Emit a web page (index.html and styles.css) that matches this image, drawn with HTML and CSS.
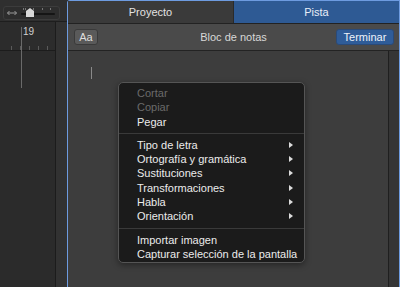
FILE: index.html
```html
<!DOCTYPE html>
<html>
<head>
<meta charset="utf-8">
<link rel="stylesheet" href="styles.css">
</head>
<body>
<div class="left">
  <div class="ltool">
    <div class="zoombox">
      <svg class="arrows" width="10" height="6" viewBox="0 0 10 6"><path d="M0.5 3 H9.5 M2.5 1 L0.5 3 L2.5 5 M7.5 1 L9.5 3 L7.5 5" stroke="#9a9a9a" stroke-width="1" fill="none"/></svg>
      <div class="slider">
        <span class="tk t1"></span><span class="tk t2"></span><span class="tk t3"></span><span class="tk t4"></span><span class="tk t5"></span>
        <div class="track"></div>
        <svg class="thumb" width="8" height="9" viewBox="0 0 8 9"><path d="M4 0 L8 3 L8 9 L0 9 L0 3 Z" fill="#d8d8d8"/></svg>
      </div>
    </div>
  </div>
  <div class="lbody">
    <div class="tracks">
      <div class="ruler">
        <span class="bar">19</span>
        <div class="ticks"><i></i><i></i><i></i><i></i><i></i></div>
      </div>
      <div class="lanes"></div>
      <div class="playhead"></div>
    </div>
    <div class="gutter"></div>
  </div>
</div>
<div class="panel">
  <div class="tabs">
    <div class="tab">Proyecto</div>
    <div class="tab active">Pista</div>
  </div>
  <div class="ptool">
    <button class="aa">Aa</button>
    <div class="ptitle">Bloc de notas</div>
    <button class="done">Terminar</button>
  </div>
  <div class="pbody">
    <div class="notes"><span class="caret"></span></div>
    <div class="pscroll"></div>
  </div>
</div>
<div class="menu">
  <div class="item dis">Cortar</div>
  <div class="item dis">Copiar</div>
  <div class="item">Pegar</div>
  <div class="sep"></div>
  <div class="item sub">Tipo de letra</div>
  <div class="item sub">Ortografía y gramática</div>
  <div class="item sub">Sustituciones</div>
  <div class="item sub">Transformaciones</div>
  <div class="item sub">Habla</div>
  <div class="item sub">Orientación</div>
  <div class="sep"></div>
  <div class="item">Importar imagen</div>
  <div class="item">Capturar selección de la pantalla</div>
</div>
</body>
</html>
```
FILE: styles.css
```css
* { box-sizing: border-box; }
html, body { margin: 0; padding: 0; }
body {
  width: 400px; height: 287px; overflow: hidden;
  background: #2a2a2a;
  font-family: "Liberation Sans", Arial, sans-serif;
  display: flex;
  position: relative;
}
.left { width: 67px; display: flex; flex-direction: column; }
.ltool { height: 22px; background: #2f2f2f; border-bottom: 1px solid #1e1e1e; padding: 6px 0 0 3px; }
.zoombox {
  width: 57px; height: 14px; border: 1px solid #3c3c3c; border-radius: 3px; background: #2d2d2d;
  display: flex; align-items: center; gap: 4px; padding-left: 3px;
}
.arrows { display: block; }
.slider { position: relative; width: 34px; height: 12px; }
.track { position: absolute; left: 0; right: 0; top: 6px; height: 2px; background: #151515; border-radius: 1px; }
.thumb { position: absolute; left: 5px; top: 1px; }
.tk { position: absolute; top: 1px; width: 1px; height: 2px; background: #777; }
.t1 { left: 2px; } .t2 { left: 4px; } .t3 { left: 12px; } .t4 { left: 21px; } .t5 { left: 29px; }
.lbody { flex: 1; display: flex; }
.tracks { width: 56px; position: relative; border-right: 1px solid #1c1c1c; display: flex; flex-direction: column; }
.ruler { height: 29px; border-bottom: 1px solid #1c1c1c; position: relative; background: #2c2c2c; }
.bar { position: absolute; left: 23px; top: 4px; color: #d0d0d0; font-size: 10px; }
.ticks { position: absolute; left: 11px; bottom: 0; display: flex; gap: 8px; }
.ticks i { width: 1px; height: 4px; background: #5a5a5a; }
.lanes { flex: 1; background: #2b2b2b; }
.playhead { position: absolute; left: 21px; top: 5px; width: 1px; height: 61px; background: #6a6a6a; }
.gutter { flex: 1; background: #323232; }
.panel {
  flex: 1; display: flex; flex-direction: column;
  border: 1px solid #6d9be0; border-bottom: none; border-top-left-radius: 3px;
  background: #3d3d3d;
}
.tabs { height: 23px; display: flex; border-bottom: 1px solid #222; }
.tab { flex: 1; display: flex; align-items: center; justify-content: center; background: #3a3a3a; color: #e2e2e2; font-size: 11px; }
.tab.active { background: #2e5a94; color: #e8eef8; border-left: 1px solid #2a2a2a; }
.ptool {
  height: 27px; background: #4a4a4a; border-bottom: 1px solid #232323;
  display: flex; align-items: center; padding: 0 5px 0 6px;
}
.aa {
  width: 24px; height: 16px; padding: 0; background: #5a5a5a; border: 1px solid #3a3a3a; border-radius: 3px;
  color: #dedede; font: 11px "Liberation Sans", Arial, sans-serif;
}
.ptitle { flex: 1; text-align: center; color: #d8d8d8; font-size: 11px; padding-left: 33px; }
.done {
  width: 58px; height: 16px; padding: 0; background: #2f5c98; border: 1px solid #2a4a78; border-radius: 3px;
  color: #eef2f8; font: 11px "Liberation Sans", Arial, sans-serif;
}
.pbody { flex: 1; display: flex; }
.notes { flex: 1; background: #3d3d3d; border-right: 1px solid #1f1f1f; position: relative; }
.caret { position: absolute; left: 23px; top: 16px; width: 1px; height: 12px; background: #8a8a8a; }
.pscroll { width: 10px; background: #353535; }
.menu {
  position: absolute; left: 118px; top: 82px; width: 187px; height: 181px;
  background: #1b1b1b; border: 1px solid #555; border-radius: 5px;
  padding: 3px 0 0 0;
  box-shadow: 0 2px 6px rgba(0,0,0,0.4);
}
.item {
  height: 14.3px; line-height: 14.3px; padding-left: 18px; color: #ececec; font-size: 11px; position: relative;
  white-space: nowrap;
}
.item.dis { color: #6a6a6a; }
.item.sub::after {
  content: ""; position: absolute; right: 11px; top: 4px;
  border-left: 4px solid #dcdcdc; border-top: 3px solid transparent; border-bottom: 3px solid transparent;
}
.sep { height: 1px; background: #3a3a3a; margin: 4px 0 4px 0; }
```
